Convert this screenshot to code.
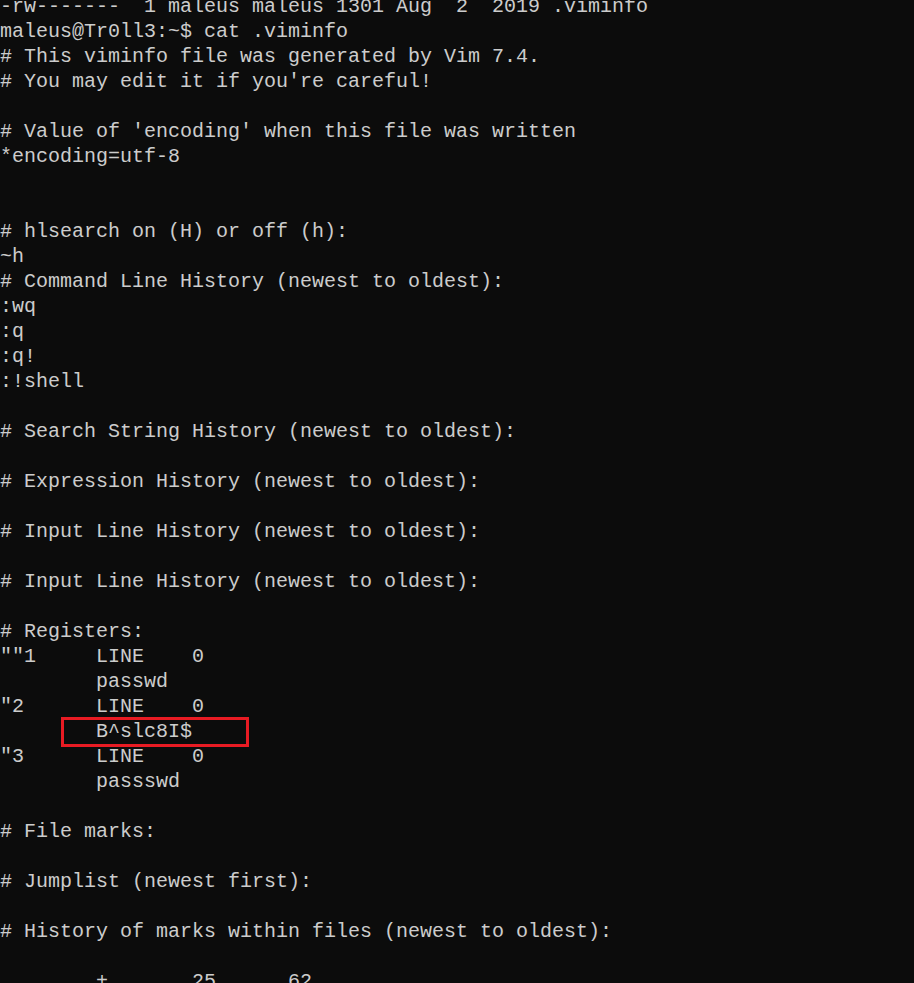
import React from "react";

const lines = [
  "-rw-------  1 maleus maleus 1301 Aug  2  2019 .viminfo",
  "maleus@Tr0ll3:~$ cat .viminfo",
  "# This viminfo file was generated by Vim 7.4.",
  "# You may edit it if you're careful!",
  "",
  "# Value of 'encoding' when this file was written",
  "*encoding=utf-8",
  "",
  "",
  "# hlsearch on (H) or off (h):",
  "~h",
  "# Command Line History (newest to oldest):",
  ":wq",
  ":q",
  ":q!",
  ":!shell",
  "",
  "# Search String History (newest to oldest):",
  "",
  "# Expression History (newest to oldest):",
  "",
  "# Input Line History (newest to oldest):",
  "",
  "# Input Line History (newest to oldest):",
  "",
  "# Registers:",
  '""1     LINE    0',
  "        passwd",
  '"2      LINE    0',
  "        B^slc8I$",
  '"3      LINE    0',
  "        passswd",
  "",
  "# File marks:",
  "",
  "# Jumplist (newest first):",
  "",
  "# History of marks within files (newest to oldest):",
  "",
  "        +       25      62",
];

const App = () => {
  return (
    <div className="h-[983px] w-full overflow-hidden bg-[#0c0c0c]">
      <div
        className="relative -mt-[6px] text-[20px] leading-[25px] text-[#cccccc] whitespace-pre"
        style={{ fontFamily: '"Liberation Mono", "DejaVu Sans Mono", monospace' }}
      >
        {lines.map((line, i) => (
          <div key={i} className="h-[25px]">
            {line}
          </div>
        ))}
        {/* highlight box around the password */}
        <div className="absolute left-[61px] top-[723px] w-[188px] h-[30px] border-[3px] border-[#e81b23]"></div>
      </div>
    </div>
  );
};

export default App;
